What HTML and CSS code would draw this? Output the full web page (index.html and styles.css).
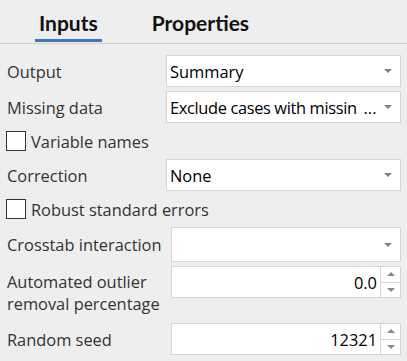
FILE: index.html
```html
<!DOCTYPE html>
<html lang="en">
<head>
  <meta charset="UTF-8">
  <title>Inputs</title>
  <link rel="stylesheet" href="styles.css">
</head>
<body>
  <div class="tabs">
    <div class="tab active">Inputs</div>
    <div class="tab">Properties</div>
  </div>

  <div class="form">
    <div class="row">
      <div class="label">Output</div>
      <div class="select"><span>Summary</span><i class="arrow"></i></div>
    </div>
    <div class="row">
      <div class="label">Missing data</div>
      <div class="select"><span class="tight">Exclude cases with missin <b class="more">...</b></span><i class="arrow"></i></div>
    </div>
    <div class="check-row">
      <span class="box"></span>Variable names
    </div>
    <div class="row">
      <div class="label">Correction</div>
      <div class="select"><span>None</span><i class="arrow"></i></div>
    </div>
    <div class="check-row">
      <span class="box"></span>Robust standard errors
    </div>
    <div class="row row-tall">
      <div class="label">Crosstab interaction</div>
      <div class="select narrow"><span></span><i class="arrow"></i></div>
    </div>
    <div class="row row-top">
      <div class="label two-line">Automated outlier<br>removal percentage</div>
      <div class="number narrow">
        <span class="value">0.0</span>
        <div class="spin"><i class="up"></i><i class="down"></i></div>
      </div>
    </div>
    <div class="row">
      <div class="label">Random seed</div>
      <div class="number narrow">
        <span class="value">12321</span>
        <div class="spin"><i class="up"></i><i class="down"></i></div>
      </div>
    </div>
  </div>
</body>
</html>
```

FILE: styles.css
```css
body{
  margin: 0;
  background: #eeeeee;
  font-family: "Open Sans", "Noto Sans", sans-serif;
  font-size: 16.4px;
  color: #333;
}

.tabs{
  display: flex;
  height: 43px;
  padding-left: 35px;
  gap: 46px;
  border-bottom: 1px solid #d3d3d3;
}
.tab{
  position: relative;
  padding: 0 4px;
  font-family: Lato, sans-serif;
  font-weight: 700;
  font-size: 21px;
  line-height: 45px;
  color: #111;
}
.tab.active::after{
  content: '';
  position: absolute;
  left: 0;
  right: 0;
  bottom: 1px;
  height: 3px;
  background: #3b78c4;
}

.form{
  padding: 11px 6px 0 7px;
}

.row{
  display: flex;
  align-items: center;
  margin-bottom: 4px;
}
.row-top{
  align-items: flex-start;
  margin-bottom: 8px;
}
.label{
  width: 159px;
  flex: none;
  white-space: nowrap;
}
.two-line{
  line-height: 22px;
  padding-top: 5px;
}

.select, .number{
  flex: 1;
  min-width: 0;
  height: 32px;
  box-sizing: border-box;
  border: 1px solid #d4d4d4;
  background: #fff;
  display: flex;
  align-items: center;
  color: #000;
}
.row-tall .select{
  height: 35px;
}
.narrow{
  margin-left: 5px;
}
.select span{
  flex: 1;
  min-width: 0;
  padding-left: 3px;
  white-space: nowrap;
  overflow: hidden;
}
.select .tight{
  letter-spacing: -0.35px;
}
.select .more{
  font-weight: 400;
  margin-left: 3px;
  letter-spacing: 0;
}
.arrow{
  flex: none;
  width: 0;
  height: 0;
  margin: 0 8px 0 6px;
  border-left: 4px solid transparent;
  border-right: 4px solid transparent;
  border-top: 4px solid #808080;
}

.number .value{
  flex: 1;
  text-align: right;
  padding-right: 3px;
}
.spin{
  width: 19px;
  height: 100%;
  border-left: 1px solid #d4d4d4;
  display: flex;
  flex-direction: column;
}
.spin i{
  flex: 1;
  display: flex;
  justify-content: center;
  align-items: center;
}
.spin .up{
  border-bottom: 1px solid #d4d4d4;
}
.spin .up::after, .spin .down::after{
  content: '';
  border-left: 4px solid transparent;
  border-right: 4px solid transparent;
}
.spin .up::after{
  border-bottom: 4px solid #8a8a8a;
}
.spin .down::after{
  border-top: 4px solid #8a8a8a;
}

.check-row{
  display: flex;
  align-items: center;
  height: 28px;
  margin-bottom: 4px;
}
.box{
  width: 18px;
  height: 18px;
  margin: 0 5px 0 -1px;
  border: 1px solid #333;
  background: #fff;
}
```
